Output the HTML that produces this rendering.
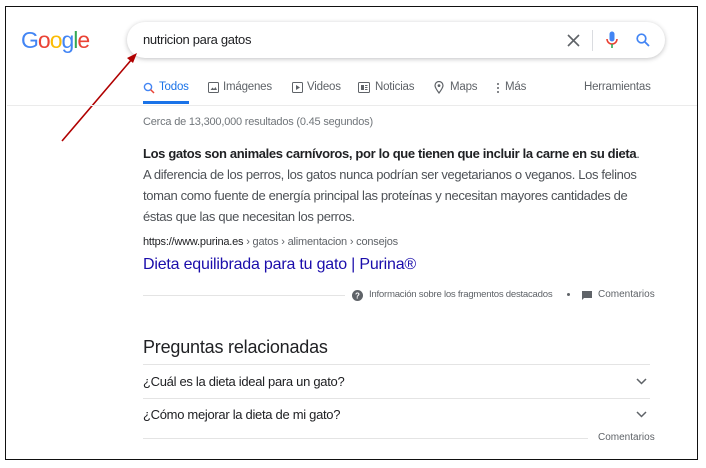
<!DOCTYPE html>
<html><head><meta charset="utf-8"><style>
*{margin:0;padding:0;box-sizing:border-box}
body{width:706px;height:468px;background:#fff;font-family:"Liberation Sans",Arial,sans-serif;position:relative;overflow:hidden;color:#202124}
.frame{position:absolute;left:5px;top:6px;width:693px;height:454px;border:1.5px solid #111}
.a{position:absolute;white-space:nowrap}
.box{position:absolute;left:127px;top:22px;width:538px;height:36px;border-radius:18px;box-shadow:0 1px 5px rgba(32,33,36,.28);background:#fff}
.tab{position:absolute;top:81px;font-size:11.5px;color:#5f6368;letter-spacing:-.2px}
.hl{position:absolute;height:1px;background:#e4e4e4}
.sn{font-size:13px;letter-spacing:-.35px;line-height:21px}
</style></head><body>
<div class="frame"></div>
<div class="a" style="left:21px;top:27px;font-size:23px;letter-spacing:-1px;font-weight:normal">
<span style="color:#4285f4">G</span><span style="color:#ea4335">o</span><span style="color:#fbbc05">o</span><span style="color:#4285f4">g</span><span style="color:#34a853">l</span><span style="color:#ea4335">e</span></div>
<div class="box"></div>
<div class="a" style="left:143px;top:32px;font-size:13px;letter-spacing:-.3px;color:#202124">nutricion para gatos</div>
<svg class="a" style="left:567px;top:34px" width="13" height="13" viewBox="0 0 13 13"><path d="M1 1L12 12M12 1L1 12" stroke="#5f6368" stroke-width="1.6"/></svg>
<div class="a" style="left:592px;top:30px;width:1px;height:21px;background:#dadce0"></div>
<svg class="a" style="left:606px;top:31px" width="12" height="18" viewBox="0 0 12 18"><rect x="3.5" y="0.5" width="5" height="10" rx="2.5" fill="#4285f4"/><path d="M1 8a5 5 0 0 0 10 0" stroke="#ea4335" stroke-width="1.6" fill="none"/><path d="M6 13v4" stroke="#34a853" stroke-width="1.6"/></svg>
<svg class="a" style="left:636px;top:33px" width="14" height="14" viewBox="0 0 14 14"><circle cx="5.5" cy="5.5" r="4.3" stroke="#4285f4" stroke-width="1.7" fill="none"/><path d="M8.6 8.6L13 13" stroke="#4285f4" stroke-width="1.8"/></svg>
<svg class="a" style="left:0;top:0" width="706" height="468"><path d="M62 141L132 59" stroke="#b00000" stroke-width="1.6"/><path d="M137 53L127 58L133 63Z" fill="#b00000"/></svg>
<svg class="a" style="left:143px;top:82px" width="12" height="12" viewBox="0 0 12 12"><circle cx="5" cy="5" r="3.6" stroke="#4285f4" stroke-width="1.4" fill="none"/><path d="M7.6 7.6L11 11" stroke="#ea4335" stroke-width="1.5"/></svg>
<div class="tab" style="left:159px;color:#1a73e8">Todos</div>
<div class="a" style="left:143px;top:101px;width:46px;height:3px;background:#1a73e8"></div>
<svg class="a" style="left:208px;top:82px" width="11" height="11"><rect x=".5" y=".5" width="10" height="10" rx="1" stroke="#5f6368" fill="none"/><path d="M2.5 8l2-2.5 1.5 1.5 1.5-2 1.5 3z" fill="#5f6368"/></svg>
<div class="tab" style="left:223px">Imágenes</div>
<svg class="a" style="left:292px;top:82px" width="11" height="11"><rect x=".5" y=".5" width="10" height="10" rx="1" stroke="#5f6368" fill="none"/><path d="M4 3v5l4-2.5z" fill="#5f6368"/></svg>
<div class="tab" style="left:307px">Videos</div>
<svg class="a" style="left:358px;top:82px" width="12" height="11"><rect x=".5" y=".5" width="11" height="10" rx="1" stroke="#5f6368" fill="none"/><rect x="3" y="3" width="3" height="5" fill="#5f6368"/><path d="M7 3.5h2.5M7 5.5h2.5M7 7.5h2.5" stroke="#5f6368"/></svg>
<div class="tab" style="left:375px">Noticias</div>
<svg class="a" style="left:434px;top:81px" width="10" height="13"><path d="M5 12C2 8 1 6 1 4.5a4 4 0 0 1 8 0C9 6 8 8 5 12z" stroke="#5f6368" stroke-width="1.2" fill="none"/><circle cx="5" cy="4.6" r="1.4" fill="#5f6368"/></svg>
<div class="tab" style="left:450px">Maps</div>
<svg class="a" style="left:496px;top:82px" width="4" height="12"><circle cx="2" cy="2" r="1" fill="#5f6368"/><circle cx="2" cy="6" r="1" fill="#5f6368"/><circle cx="2" cy="10" r="1" fill="#5f6368"/></svg>
<div class="tab" style="left:505px">Más</div>
<div class="tab" style="left:584px">Herramientas</div>
<div class="hl" style="left:7px;top:105px;width:690px;background:#ebebeb"></div>
<div class="a" style="left:143px;top:116px;font-size:11px;color:#70757a;letter-spacing:-.2px">Cerca de 13,300,000 resultados (0.45 segundos)</div>
<div class="a sn" style="left:143px;top:143px"><b>Los gatos son animales carnívoros, por lo que tienen que incluir la carne en su dieta</b><span style="color:#4d5156">.</span></div>
<div class="a sn" style="left:143px;top:164px;color:#4d5156">A diferencia de los perros, los gatos nunca podrían ser vegetarianos o veganos. Los felinos</div>
<div class="a sn" style="left:143px;top:185px;color:#4d5156">toman como fuente de energía principal las proteínas y necesitan mayores cantidades de</div>
<div class="a sn" style="left:143px;top:206px;color:#4d5156">éstas que las que necesitan los perros.</div>
<div class="a" style="left:143px;top:236px;font-size:11px;color:#202124;letter-spacing:-.2px">https://www.purina.es <span style="color:#5f6368">› gatos › alimentacion › consejos</span></div>
<div class="a" style="left:143px;top:256px;font-size:16px;color:#1a0dab;letter-spacing:-.2px">Dieta equilibrada para tu gato | Purina®</div>
<div class="hl" style="left:143px;top:295px;width:202px"></div>
<svg class="a" style="left:352px;top:290px" width="11" height="11"><circle cx="5.5" cy="5.5" r="5.5" fill="#5f6368"/><text x="5.5" y="8.5" font-size="8" fill="#fff" text-anchor="middle" font-family="Liberation Sans" font-weight="bold">?</text></svg>
<div class="a" style="left:369px;top:289px;font-size:9.6px;color:#5f6368;letter-spacing:-.25px">Información sobre los fragmentos destacados</div>
<div class="a" style="left:567px;top:293px;width:3px;height:3px;border-radius:50%;background:#5f6368"></div>
<svg class="a" style="left:582px;top:291px" width="10" height="9"><path d="M0 0h10v7H2L0 9z" fill="#5f6368"/></svg>
<div class="a" style="left:598px;top:289px;font-size:10px;color:#5f6368">Comentarios</div>
<div class="a" style="left:143px;top:337px;font-size:18px;color:#202124;letter-spacing:-.2px">Preguntas relacionadas</div>
<div class="hl" style="left:143px;top:364px;width:507px"></div>
<div class="a" style="left:143px;top:374px;font-size:13px;letter-spacing:-.3px">¿Cuál es la dieta ideal para un gato?</div>
<svg class="a" style="left:636px;top:378px" width="11" height="7"><path d="M1 1l4.5 4.5L10 1" stroke="#5f6368" stroke-width="1.5" fill="none"/></svg>
<div class="hl" style="left:143px;top:398px;width:507px"></div>
<div class="a" style="left:143px;top:407px;font-size:13px;letter-spacing:-.3px">¿Cómo mejorar la dieta de mi gato?</div>
<svg class="a" style="left:636px;top:411px" width="11" height="7"><path d="M1 1l4.5 4.5L10 1" stroke="#5f6368" stroke-width="1.5" fill="none"/></svg>
<div class="hl" style="left:143px;top:438px;width:445px"></div>
<div class="a" style="left:598px;top:432px;font-size:10px;color:#5f6368">Comentarios</div>
</body></html>
